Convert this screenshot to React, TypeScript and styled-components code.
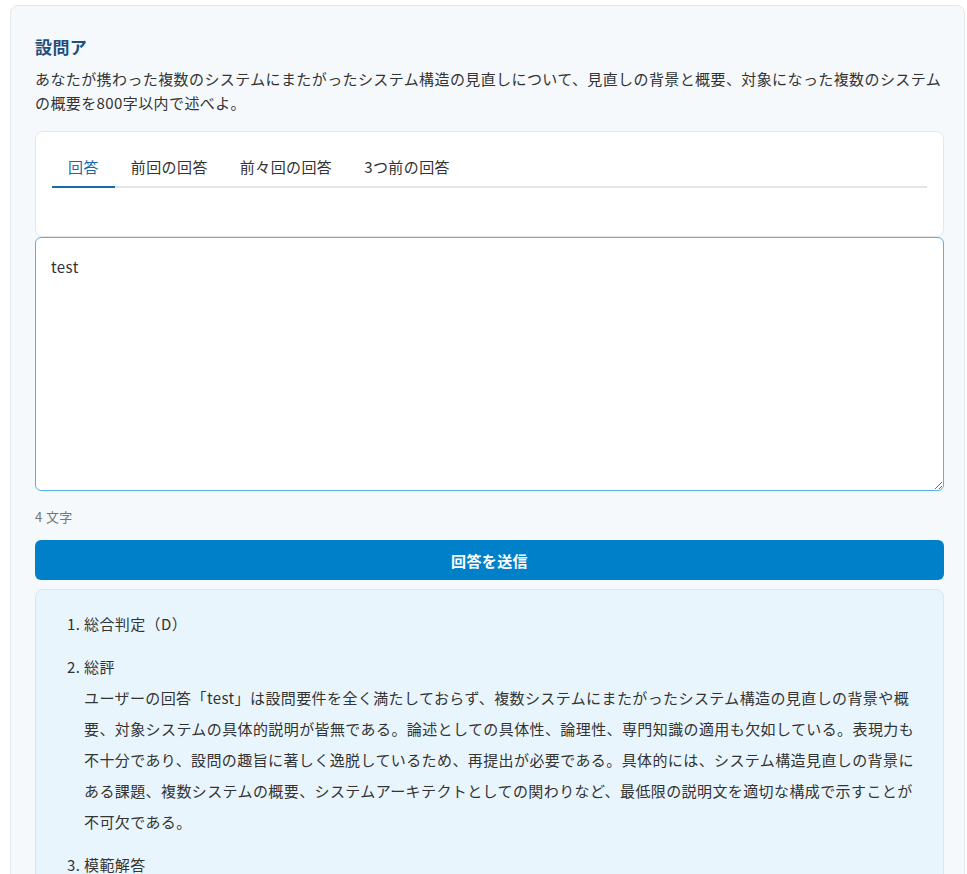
import React from "react";
import styled, { createGlobalStyle } from "styled-components";

const GlobalStyle = createGlobalStyle`
  body {
    margin: 0;
    background: #fff;
    font-family: "Noto Sans CJK JP", "Noto Sans", sans-serif;
    color: #333;
    letter-spacing: 0.4px;
  }
`;

const Page = styled.div`
  padding: 5px 2px 0 10px;
`;

const Panel = styled.section`
  background: #f5f9fc;
  border: 1px solid #e3e9ef;
  border-radius: 8px;
  padding: 28px 20px 0 24px;
`;

const Title = styled.h2`
  margin: 0 0 8px;
  font-size: 17px;
  font-weight: 700;
  color: #1f4f7d;
`;

const Description = styled.p`
  margin: 0 0 16px;
  font-size: 15px;
  line-height: 24px;
  color: #333;
`;

const TabCard = styled.div`
  background: #fff;
  border: 1px solid #e3e7ec;
  border-radius: 8px;
  padding: 16px 16px 48px;
`;

const TabList = styled.div`
  display: flex;
  border-bottom: 2px solid #e2e6ea;
`;

const Tab = styled.button<{ $active?: boolean }>`
  background: none;
  border: none;
  font-family: inherit;
  letter-spacing: inherit;
  font-size: 15px;
  padding: 8px 16px 9px;
  margin-bottom: -2px;
  color: ${(p) => (p.$active ? "#1a6aa8" : "#333")};
  border-bottom: 2px solid ${(p) => (p.$active ? "#1a6aa8" : "transparent")};
  cursor: pointer;
`;

const Answer = styled.textarea`
  display: block;
  box-sizing: border-box;
  width: 100%;
  height: 254px;
  border: 1px solid #5ab0e6;
  border-radius: 6px;
  padding: 18px 15px;
  font-family: inherit;
  letter-spacing: inherit;
  font-size: 15px;
  color: #333;
  background: #fff;
  resize: vertical;
  outline: none;
`;

const Count = styled.div`
  font-size: 13px;
  color: #777;
  margin: 16px 0 14px;
`;

const SubmitButton = styled.button`
  display: block;
  width: 100%;
  height: 40px;
  border: none;
  border-radius: 6px;
  background: #0080c9;
  color: #fff;
  font-family: inherit;
  letter-spacing: inherit;
  font-size: 15px;
  font-weight: 700;
  cursor: pointer;
`;

const Feedback = styled.div`
  margin-top: 9px;
  background: #e9f5fd;
  border: 1px solid #d6e6f2;
  border-radius: 8px;
  padding: 18px 28px 10px 20px;
`;

const List = styled.ol`
  margin: 0;
  padding-left: 28px;
  font-size: 15px;
  line-height: 31px;
  color: #333;
`;

const Item = styled.li`
  margin-bottom: 12px;
`;

export default function App() {
  return (
    <>
      <GlobalStyle />
      <Page>
        <Panel>
          <Title>設問ア</Title>
          <Description>
            あなたが携わった複数のシステムにまたがったシステム構造の見直しについて、見直しの背景と概要、対象になった複数のシステムの概要を800字以内で述べよ。
          </Description>
          <TabCard>
            <TabList>
              <Tab $active>回答</Tab>
              <Tab>前回の回答</Tab>
              <Tab>前々回の回答</Tab>
              <Tab>3つ前の回答</Tab>
            </TabList>
          </TabCard>
          <Answer defaultValue="test" />
          <Count>4 文字</Count>
          <SubmitButton>回答を送信</SubmitButton>
          <Feedback>
            <List>
              <Item>総合判定（D）</Item>
              <Item>
                総評
                <br />
                ユーザーの回答「test」は設問要件を全く満たしておらず、複数システムにまたがったシステム構造の見直しの背景や概要、対象システムの具体的説明が皆無である。論述としての具体性、論理性、専門知識の適用も欠如している。表現力も不十分であり、設問の趣旨に著しく逸脱しているため、再提出が必要である。具体的には、システム構造見直しの背景にある課題、複数システムの概要、システムアーキテクトとしての関わりなど、最低限の説明文を適切な構成で示すことが不可欠である。
              </Item>
              <Item>模範解答</Item>
            </List>
          </Feedback>
        </Panel>
      </Page>
    </>
  );
}
